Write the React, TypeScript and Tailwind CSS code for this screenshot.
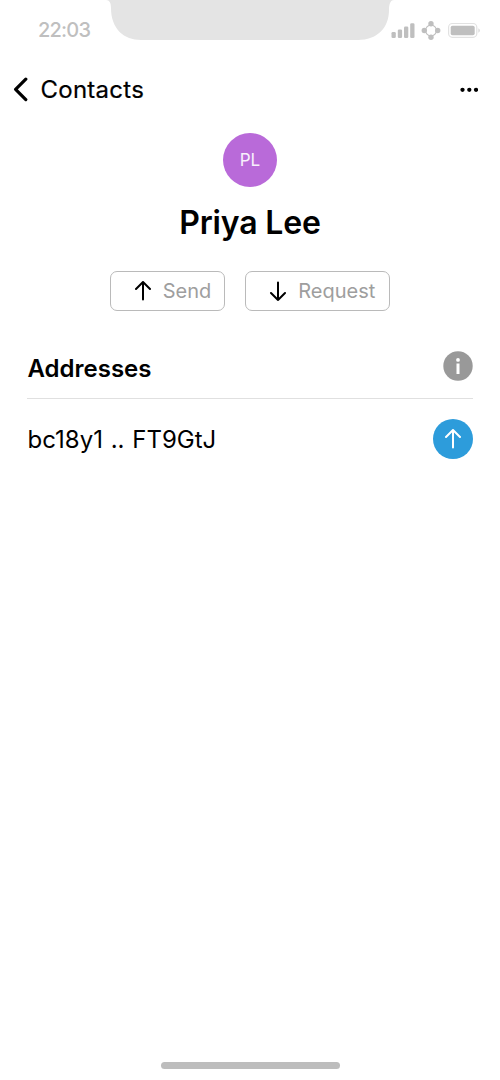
import type { ReactNode } from "react";

function StatusBar() {
  return (
    <div className="flex h-[60px] shrink-0 items-start justify-between">
      <span className="mt-[18px] ml-[38px] w-[68px] text-[20px] leading-6 font-medium tracking-[-0.8px] whitespace-nowrap text-[#bfbfbf]">22:03</span>
      <svg className="h-10 w-[288px] shrink-0" viewBox="0 0 288 40" aria-hidden="true">
        <path d="M0 0C3.500 0 5 3 5 8C5 29 18 40 35 40H252C271 40 283 28 283 10C283 3 285 0 288 0Z" fill="#e4e4e4" />
      </svg>
      <svg className="mt-[18px] mr-[18px] h-6 w-[88px] shrink-0" viewBox="394 18 88 24" fill="#bfbfbf" overflow="visible" aria-hidden="true">
        <rect x="391.500" y="32" width="4.300" height="6" rx="1.300" />
        <rect x="397.800" y="29.500" width="4.300" height="8.500" rx="1.300" />
        <rect x="404" y="26.500" width="4.300" height="11.500" rx="1.300" />
        <rect x="410.200" y="23.300" width="4.300" height="14.700" rx="1.300" />
        <circle cx="431" cy="30.500" r="5.400" fill="none" stroke="#bfbfbf" strokeWidth="1.100" />
        <circle cx="431" cy="23.800" r="2.700" />
        <circle cx="424.300" cy="30.500" r="2.700" />
        <circle cx="437.700" cy="30.500" r="2.700" />
        <circle cx="431" cy="37.200" r="2.700" />
        <rect x="448.600" y="23.500" width="28.200" height="13.800" rx="3.800" fill="none" stroke="#e2e2e2" strokeWidth="1.200" />
        <rect x="450.700" y="25.800" width="24" height="9.400" rx="1.800" />
        <path d="M478.300 28.300Q480 29 480 30.500T478.300 32.700Z" fill="#dddddd" />
      </svg>
    </div>
  );
}

function Arrow({ down = false, className }: { down?: boolean; className: string }) {
  return (
    <svg className={className} viewBox="0 0 20 20" fill="none" stroke="currentColor" strokeWidth="2" aria-hidden="true">
      <path d={down ? "M10 1.500V19M3 12L10 19L17 12" : "M10 18.500V1M3 8L10 1L17 8"} strokeLinecap="round" strokeLinejoin="round" />
    </svg>
  );
}

function ActionButton({ icon, label, className }: { icon: ReactNode; label: string; className: string }) {
  return (
    <button className={`flex h-10 items-center rounded-[7px] border-[1.5px] border-[#bababa] pl-[22px] ${className}`}>
      {icon}
      <span className="ml-[10px] text-[20px] leading-6 whitespace-nowrap text-[#9e9e9e]">{label}</span>
    </button>
  );
}

export default function App() {
  return (
    <main className="flex h-[1080px] w-[500px] flex-col overflow-hidden bg-white font-['Inter',sans-serif] text-black">
      <StatusBar />
      <header className="flex h-[60px] shrink-0 items-center justify-between pr-[22px] pl-[13px]">
        <button className="flex items-center">
          <svg className="h-[26px] w-4" viewBox="0 0 16 26" fill="none" stroke="currentColor" strokeWidth="3.200" strokeLinecap="round" strokeLinejoin="round" aria-hidden="true">
            <path d="M12.800 2.200L2.600 12.300L12.800 22.600" />
          </svg>
          <span className="ml-[11.500px] text-[24px] leading-8 tracking-[0.25px] [-webkit-text-stroke:0.2px_black]">Contacts</span>
        </button>
        <svg className="h-[6px] w-[18px]" viewBox="0 0 18 6" fill="currentColor" aria-hidden="true">
          <circle cx="2.500" cy="2.800" r="2.150" />
          <circle cx="9.300" cy="2.800" r="2.150" />
          <circle cx="16" cy="2.800" r="2.150" />
        </svg>
      </header>
      <section className="flex flex-col items-center pt-[13px]">
        <div className="flex size-[53.500px] items-center justify-center rounded-full bg-[#b96ad9] pt-0.5 text-[17px] text-white/90">PL</div>
        <h1 className="mt-4 text-[32px] leading-10 font-semibold tracking-[-0.15px] whitespace-nowrap">Priya Lee</h1>
        <div className="mt-[28.500px] flex gap-5">
          <ActionButton className="w-[115.500px]" label="Send" icon={<Arrow className="mb-px size-5" />} />
          <ActionButton className="w-[145px]" label="Request" icon={<Arrow down className="size-5" />} />
        </div>
      </section>
      <section className="mx-[27px] mt-[28px]">
        <div className="flex h-[60px] items-center justify-between border-b-[1.5px] border-[#e0e0e0]">
          <h2 className="pl-[0.500px] text-[24px] leading-8 font-semibold">Addresses</h2>
          <svg className="mb-[6px] size-[30px]" viewBox="0 0 30 30" aria-hidden="true">
            <circle cx="15" cy="15" r="14.700" fill="#999999" />
            <circle cx="15" cy="8.900" r="1.900" fill="white" />
            <path d="M15 12.500V23" stroke="white" strokeWidth="3" />
          </svg>
        </div>
        <div className="flex h-20 items-center justify-between">
          <span className="pt-[2px] pl-[0.500px] text-[24px] leading-8 [word-spacing:1px] whitespace-nowrap">bc18y1 .. FT9GtJ</span>
          <button className="flex size-10 items-center justify-center rounded-full bg-[#2d9cdb] text-white">
            <Arrow className="mb-px size-5" />
          </button>
        </div>
      </section>
      <footer className="mt-auto flex justify-center pb-[11px]">
        <div className="h-[7px] w-[179px] rounded-full bg-[#bdbdbd]" />
      </footer>
    </main>
  );
}
